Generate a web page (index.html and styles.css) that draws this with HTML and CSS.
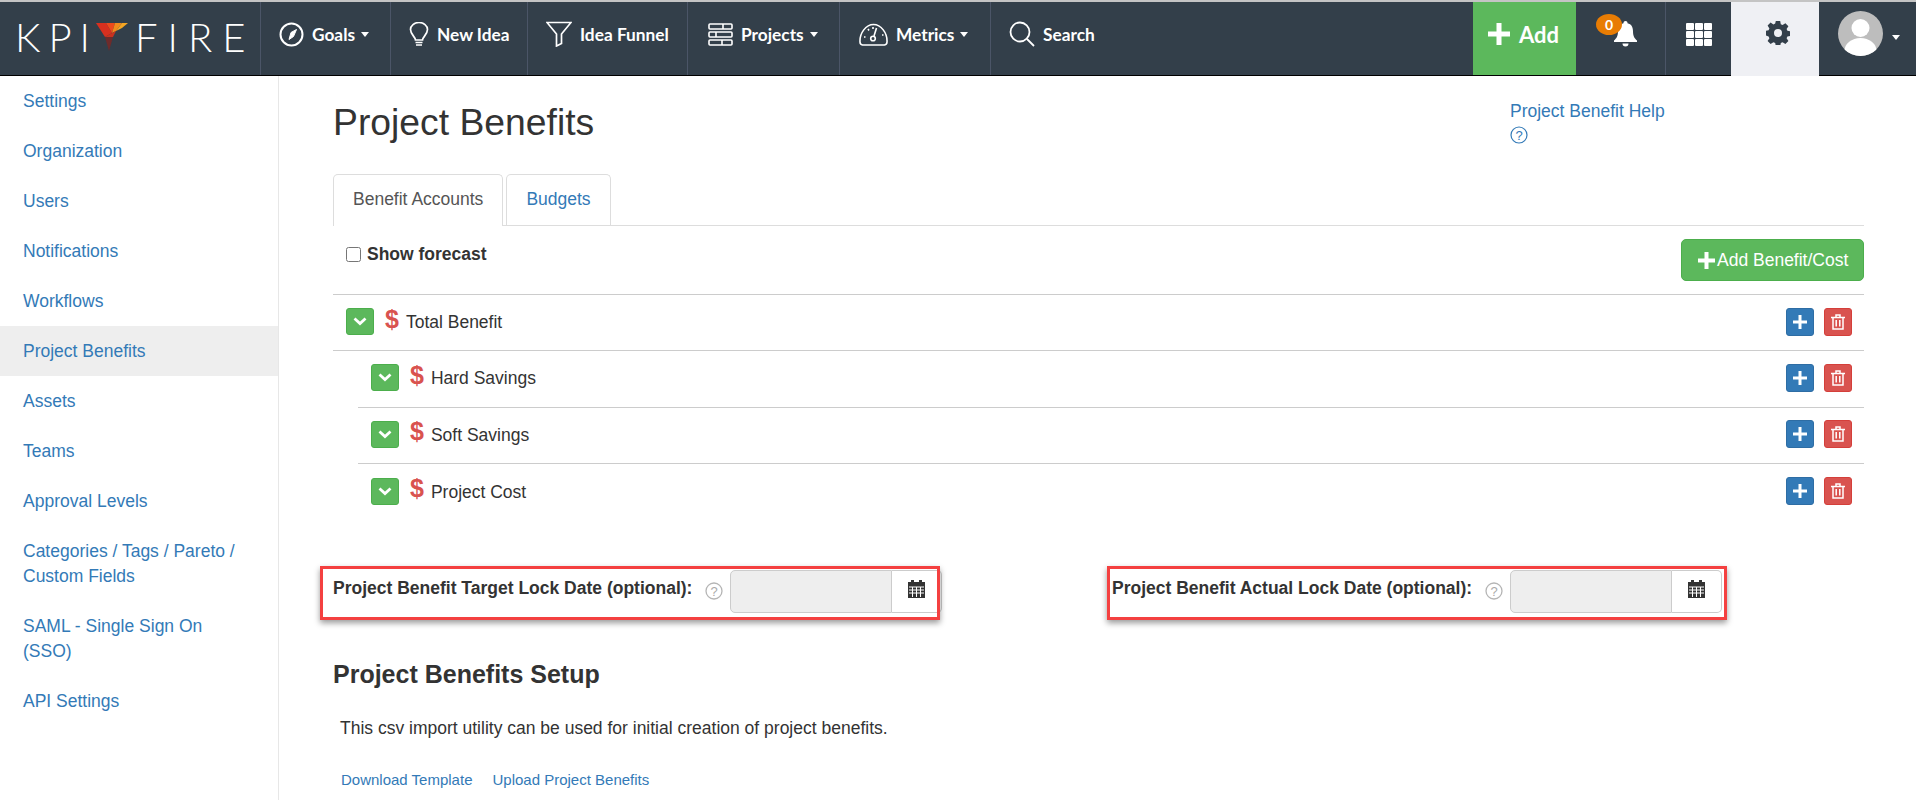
FILE: index.html
```html
<!DOCTYPE html>
<html lang="en">
<head>
<meta charset="utf-8">
<title>Project Benefits</title>
<link rel="stylesheet" href="styles.css">
</head>
<body>
<header class="topbar">
  <a class="logo">
    <span class="logo-text logo-kpi">KPI</span>
    <svg class="logo-mark" viewBox="0 0 32 28" width="32" height="28">
      <polygon points="0,0 10,0 16,10 9,14" fill="#d8301f"/>
      <polygon points="10,0 19,0 16,10" fill="#ee4a1c"/>
      <polygon points="19,0 26,0 20,8 16,10" fill="#f28a1c"/>
      <polygon points="26,0 32,0 26,5 20,8" fill="#f5a623"/>
      <polygon points="9,14 16,10 20,8 17,14" fill="#c9321f"/>
      <polygon points="9,14 17,14 13,28" fill="#6e2b2b"/>
    </svg>
    <span class="logo-text logo-fire">FIRE</span>
  </a>
  <a class="nav-item w-goals">
    <svg class="nav-icon" width="25" height="25" viewBox="0 0 25 25" fill="none" stroke="#fff" stroke-width="2"><circle cx="12.5" cy="12.5" r="11"/><path d="M17.5 7.5l-3 7-4.500 3 2-7z" fill="#fff" stroke-width="1"/></svg>
    <span>Goals</span><i class="caret"></i>
  </a>
  <a class="nav-item w-idea">
    <svg class="nav-icon" width="20" height="25" viewBox="0 0 20 25" fill="none" stroke="#fff" stroke-width="1.700"><path d="M6.500 18c0-3-5-5.500-5-10.500a8.500 7 0 0 1 17 0c0 5-5 7.500-5 10.500z"/><path d="M6.500 20.500h7M7 23h6"/></svg>
    <span>New Idea</span>
  </a>
  <a class="nav-item w-funnel">
    <svg class="nav-icon" width="26" height="26" viewBox="0 0 26 26" fill="none" stroke="#fff" stroke-width="1.700"><path d="M1 1.500h24l-9.500 11.500v9.500l-5 2.500v-12z"/></svg>
    <span>Idea Funnel</span>
  </a>
  <a class="nav-item w-projects">
    <svg class="nav-icon" width="25" height="23" viewBox="0 0 25 23" fill="none" stroke="#fff" stroke-width="1.600"><rect x="1" y="1" width="23" height="5" rx="1"/><rect x="1" y="9" width="23" height="5" rx="1"/><rect x="1" y="17" width="23" height="5" rx="1"/><path d="M15 1v5M8 9v5M14 17v5"/></svg>
    <span>Projects</span><i class="caret"></i>
  </a>
  <a class="nav-item w-metrics">
    <svg class="nav-icon" width="29" height="23" viewBox="0 0 29 23" fill="none" stroke="#fff" stroke-width="1.600"><path d="M3.500 22h22a3 3 0 0 0 2.500-3c.5-9-6-17.500-13.500-17.500S.5 10 1 19a3 3 0 0 0 2.500 3z"/><circle cx="14" cy="15.500" r="2.300"/><path d="M15 13l2.500-8M5 14h1.500M23 12h1.500M9 6l1 1.500M14 4v2"/></svg>
    <span>Metrics</span><i class="caret"></i>
  </a>
  <a class="nav-item nav-search">
    <svg class="nav-icon" width="26" height="26" viewBox="0 0 26 26" fill="none" stroke="#fff" stroke-width="1.800"><circle cx="11" cy="11" r="9.500"/><path d="M18 18l7 7"/></svg>
    <span>Search</span>
  </a>
  <a class="nav-add">
    <svg width="22" height="22" viewBox="0 0 22 22" fill="#fff"><path d="M8.500 0h5v8.500H22v5h-8.500V22h-5v-8.500H0v-5h8.500z"/></svg>
    <span>Add</span>
  </a>
  <a class="nav-bell">
    <span class="badge">0</span>
    <svg width="23" height="26" viewBox="0 0 23 26" fill="#fff"><path d="M11.500 0a2 2 0 0 1 2 2.200c4 .8 5.500 4 5.500 8 0 5 1.500 7 4 9.300v1.500H0v-1.500c2.500-2.300 4-4.300 4-9.300 0-4 1.500-7.200 5.500-8a2 2 0 0 1 2-2.200z"/><path d="M8.500 22.500h6a3 3 0 0 1-6 0z"/></svg>
  </a>
  <a class="nav-grid">
    <svg width="26" height="23" viewBox="0 0 26 23" fill="#fff"><rect width="8" height="7" rx="1"/><rect x="9" width="8" height="7" rx="1"/><rect x="18" width="8" height="7" rx="1"/><rect y="8" width="8" height="7" rx="1"/><rect x="9" y="8" width="8" height="7" rx="1"/><rect x="18" y="8" width="8" height="7" rx="1"/><rect y="16" width="8" height="7" rx="1"/><rect x="9" y="16" width="8" height="7" rx="1"/><rect x="18" y="16" width="8" height="7" rx="1"/></svg>
  </a>
  <a class="nav-gear">
    <svg width="24" height="24" viewBox="0 0 24 24" fill="#333f4a"><path fill-rule="evenodd" d="M9.800 0h4.400l.6 3.200 1.800.8 2.800-1.800 3 3-1.800 2.800.8 1.800 3.100.6v4.400l-3.100.6-.8 1.800 1.800 2.800-3 3-2.800-1.800-1.800.8-.6 3.200H9.800l-.6-3.200-1.800-.8-2.800 1.800-3-3 1.800-2.800-.8-1.800L-.5 14.200V9.800l3.100-.6.800-1.800L1.600 4.600l3-3 2.800 1.800 1.800-.8zM12 8a4 4 0 1 0 0 8 4 4 0 0 0 0-8z"/></svg>
  </a>
  <a class="nav-user">
    <svg width="45" height="45" viewBox="0 0 45 45"><defs><clipPath id="avatar-clip"><circle cx="22.500" cy="22.500" r="22.500"/></clipPath></defs><circle cx="22.500" cy="22.500" r="22.500" fill="#bdbdbd"/><g clip-path="url(#avatar-clip)" fill="#fff"><circle cx="22.500" cy="17" r="9"/><ellipse cx="22.500" cy="40" rx="16" ry="13"/></g></svg>
    <i class="caret"></i>
  </a>
</header>

<div class="page">
  <nav class="sidebar">
    <a class="side-link">Settings</a>
    <a class="side-link">Organization</a>
    <a class="side-link">Users</a>
    <a class="side-link">Notifications</a>
    <a class="side-link">Workflows</a>
    <a class="side-link active">Project Benefits</a>
    <a class="side-link">Assets</a>
    <a class="side-link">Teams</a>
    <a class="side-link">Approval Levels</a>
    <a class="side-link">Categories / Tags / Pareto / Custom Fields</a>
    <a class="side-link">SAML - Single Sign On (SSO)</a>
    <a class="side-link">API Settings</a>
  </nav>

  <main class="content">
    <div class="head">
      <h1>Project Benefits</h1>
      <div class="help">
        <a>Project Benefit Help</a>
        <svg class="help-icon" width="18" height="18" viewBox="0 0 18 18"><circle cx="9" cy="9" r="8" fill="none" stroke="#337ab7" stroke-width="1.200"/><text x="9" y="13.500" text-anchor="middle" class="help-q">?</text></svg>
      </div>
    </div>

    <div class="tabs">
      <a class="tab active">Benefit Accounts</a>
      <a class="tab">Budgets</a>
    </div>

    <div class="toolbar">
      <label class="forecast"><input type="checkbox" class="check"><span>Show forecast</span></label>
      <button class="add-btn"><svg width="17" height="17" viewBox="0 0 17 17" fill="#fff"><path d="M6.500 0h4v6.500H17v4h-6.500V17h-4v-6.500H0v-4h6.500z"/></svg><span>Add Benefit/Cost</span></button>
    </div>

    <div class="tree">
      <div class="row">
        <button class="chev"><svg width="14" height="9" viewBox="0 0 14 9" fill="none" stroke="#fff" stroke-width="2.800"><path d="M1.500 1.500l5.500 5 5.500-5"/></svg></button>
        <span class="dollar">$</span><span class="name">Total Benefit</span>
        <span class="actions">
          <button class="act blue"><svg width="14" height="14" viewBox="0 0 14 14" fill="#fff"><path d="M5.500 0h3v5.500H14v3H8.500V14h-3V8.500H0v-3h5.500z"/></svg></button>
          <button class="act red"><svg width="14" height="16" viewBox="0 0 14 16" fill="none" stroke="#fff" stroke-width="1.500"><path d="M0 3.500h14M5 3V1h4v2M2 3.500V15h10V3.500M5.200 6v6.500M8.800 6v6.500"/></svg></button>
        </span>
      </div>
      <div class="row sub">
        <button class="chev"><svg width="14" height="9" viewBox="0 0 14 9" fill="none" stroke="#fff" stroke-width="2.800"><path d="M1.500 1.500l5.500 5 5.500-5"/></svg></button>
        <span class="dollar">$</span><span class="name">Hard Savings</span>
        <span class="actions">
          <button class="act blue"><svg width="14" height="14" viewBox="0 0 14 14" fill="#fff"><path d="M5.500 0h3v5.500H14v3H8.500V14h-3V8.500H0v-3h5.500z"/></svg></button>
          <button class="act red"><svg width="14" height="16" viewBox="0 0 14 16" fill="none" stroke="#fff" stroke-width="1.500"><path d="M0 3.500h14M5 3V1h4v2M2 3.500V15h10V3.500M5.200 6v6.500M8.800 6v6.500"/></svg></button>
        </span>
      </div>
      <div class="row sub">
        <button class="chev"><svg width="14" height="9" viewBox="0 0 14 9" fill="none" stroke="#fff" stroke-width="2.800"><path d="M1.500 1.500l5.500 5 5.500-5"/></svg></button>
        <span class="dollar">$</span><span class="name">Soft Savings</span>
        <span class="actions">
          <button class="act blue"><svg width="14" height="14" viewBox="0 0 14 14" fill="#fff"><path d="M5.500 0h3v5.500H14v3H8.500V14h-3V8.500H0v-3h5.500z"/></svg></button>
          <button class="act red"><svg width="14" height="16" viewBox="0 0 14 16" fill="none" stroke="#fff" stroke-width="1.500"><path d="M0 3.500h14M5 3V1h4v2M2 3.500V15h10V3.500M5.200 6v6.500M8.800 6v6.500"/></svg></button>
        </span>
      </div>
      <div class="row sub last">
        <button class="chev"><svg width="14" height="9" viewBox="0 0 14 9" fill="none" stroke="#fff" stroke-width="2.800"><path d="M1.500 1.500l5.500 5 5.500-5"/></svg></button>
        <span class="dollar">$</span><span class="name">Project Cost</span>
        <span class="actions">
          <button class="act blue"><svg width="14" height="14" viewBox="0 0 14 14" fill="#fff"><path d="M5.500 0h3v5.500H14v3H8.500V14h-3V8.500H0v-3h5.500z"/></svg></button>
          <button class="act red"><svg width="14" height="16" viewBox="0 0 14 16" fill="none" stroke="#fff" stroke-width="1.500"><path d="M0 3.500h14M5 3V1h4v2M2 3.500V15h10V3.500M5.200 6v6.500M8.800 6v6.500"/></svg></button>
        </span>
      </div>
    </div>

    <div class="locks">
      <div class="lock lock-left">
        <label>Project Benefit Target Lock Date (optional):</label>
        <svg class="q" width="18" height="18" viewBox="0 0 18 18"><circle cx="9" cy="9" r="8" fill="none" stroke="#b5b5b5" stroke-width="1.300"/><text x="9" y="13.500" text-anchor="middle" class="q-text">?</text></svg>
        <input class="date" type="text" disabled>
        <button class="cal"><svg width="17" height="18" viewBox="0 0 17 18"><path fill="#333" d="M3 0h3v2h5V0h3v2h3v16H0V2h3z"/><path stroke="#fff" stroke-width="1" d="M1 7h15M1 10h15M1 13h15M4.500 7v10M8.500 7v10M12.500 7v10"/></svg></button>
      </div>
      <div class="lock lock-right">
        <label>Project Benefit Actual Lock Date (optional):</label>
        <svg class="q" width="18" height="18" viewBox="0 0 18 18"><circle cx="9" cy="9" r="8" fill="none" stroke="#b5b5b5" stroke-width="1.300"/><text x="9" y="13.500" text-anchor="middle" class="q-text">?</text></svg>
        <input class="date" type="text" disabled>
        <button class="cal"><svg width="17" height="18" viewBox="0 0 17 18"><path fill="#333" d="M3 0h3v2h5V0h3v2h3v16H0V2h3z"/><path stroke="#fff" stroke-width="1" d="M1 7h15M1 10h15M1 13h15M4.500 7v10M8.500 7v10M12.500 7v10"/></svg></button>
      </div>
    </div>

    <h2>Project Benefits Setup</h2>
    <p class="note">This csv import utility can be used for initial creation of project benefits.</p>
    <div class="links"><a>Download Template</a><a>Upload Project Benefits</a></div>
  </main>
</div>
</body>
</html>
```

FILE: styles.css
```css
* { box-sizing: border-box; }
html, body { margin: 0; height: 800px; overflow: hidden; }
body { font-family: "Liberation Sans", Arial, sans-serif; color: #333; background: #fff; font-size: 17.500px; }
a { color: #337ab7; text-decoration: none; }
button { font-family: inherit; padding: 0; cursor: pointer; }

/* top bar */
.topbar { display: flex; height: 76px; background: #333f4a; border-top: 2px solid #c4c4c4; border-bottom: 1px solid #000; font-family: Lato, sans-serif; font-weight: 700; font-size: 17.300px; color: #fff; }
.topbar a { color: #fff; display: flex; align-items: center; }
.logo { width: 261px; padding-left: 15px; border-right: 1px solid #4b5567; padding-bottom: 3px; }
.logo-text { font-weight: 300; font-size: 40px; line-height: 1; }
.logo-mark { flex: none; margin: 0 7px 0 0; }
.logo-kpi { width: 81px; letter-spacing: 8px; }
.logo-fire { letter-spacing: 10px; }
.nav-item { gap: 8px; padding-left: 18px; border-right: 1px solid #4b5567; padding-bottom: 9px; }
.w-goals { width: 130px; }
.w-idea { width: 137px; }
.w-funnel { width: 160px; }
.w-projects { width: 152px; padding-left: 20px; }
.w-metrics { width: 151px; padding-left: 19px; }
.nav-search { border-right: 0; flex: 1; }
.caret { width: 0; height: 0; border-left: 4.500px solid transparent; border-right: 4.500px solid transparent; border-top: 5px solid #fff; margin-left: -2px; margin-top: 1px; }
.topbar a.nav-add { width: 103px; flex: none; background: #5cb85c; font-size: 22px; gap: 9px; padding: 0 0 9px 15px; }
.topbar a.nav-bell { width: 90px; flex: none; position: relative; border-right: 1px solid #4b5567; padding: 0 0 9px 38px; }
.badge { position: absolute; left: 20px; top: 12px; width: 26px; height: 21px; border-radius: 50%; background: #e87c03; font-size: 14px; text-align: center; line-height: 21px; }
.topbar a.nav-grid { width: 65px; flex: none; justify-content: center; padding-bottom: 9px; }
.topbar a.nav-gear { width: 88px; flex: none; background: #eff0f4; justify-content: center; padding: 0 0 12px 6px; height: 74px; }
.topbar a.nav-user { width: 97px; flex: none; gap: 9px; padding: 0 0 10px 19px; }
.topbar a.nav-user .caret { margin: 8px 0 0; }

/* page */
.page { display: flex; height: 724px; }
.sidebar { width: 279px; flex: none; border-right: 1px solid #e7e7e7; }
.side-link { display: block; padding: 12.500px 30px 12.500px 23px; line-height: 25px; }
.side-link.active { background: #eee; }

.content { flex: 1; padding: 0 52px 0 54px; }
.head { display: flex; justify-content: space-between; height: 98px; }
h1 { font-size: 37.300px; font-weight: 400; margin: 23px 0 0; line-height: 46px; }
.help { width: 354px; padding-top: 23px; line-height: 25px; }
.help a { display: block; }
.help-icon { display: block; margin-top: 2px; }
.help-q { font-size: 13px; fill: #337ab7; }

.tabs { display: flex; gap: 3px; height: 52px; border-bottom: 1px solid #ddd; }
.tab { height: 52px; padding: 12px 19px 0; border: 1px solid #ddd; border-bottom: 0; border-radius: 5px 5px 0 0; line-height: 24px; }
.tab.active { background: #fff; color: #555; position: relative; }

.toolbar { display: flex; justify-content: space-between; height: 69px; padding-top: 13px; border-bottom: 1px solid #ccc; }
.forecast { display: flex; align-items: center; height: 30px; padding-left: 13px; font-weight: 700; gap: 6px; }
.check { width: 15px; height: 15px; margin: 0; }
.add-btn { display: flex; align-items: center; gap: 2px; width: 183px; height: 42px; padding-left: 16px; background: #5cb85c; border: 1px solid #4cae4c; border-radius: 5px; color: #fff; font-size: 17.500px; }

.tree { height: 225px; }
.row { display: flex; align-items: center; height: 56.300px; padding: 0 12px 2px 13px; border-bottom: 1px solid #ccc; }
.row.sub { margin-left: 25px; padding-left: 13px; }
.row.last { border-bottom: 0; }
.chev { display: flex; align-items: center; justify-content: center; width: 28px; height: 27px; background: #5cb85c; border: 1px solid #4cae4c; border-radius: 3px; }
.dollar { color: #d9534f; font-size: 25px; font-weight: 700; margin: -5px 7px 0 11px; line-height: 1; }
.name { flex: 1; margin-top: 2px; }
.actions { display: flex; gap: 10px; }
.act { display: flex; align-items: center; justify-content: center; width: 28px; height: 28px; border-radius: 3px; border: 1px solid transparent; }
.blue { background: #337ab7; border-color: #2e6da4; }
.red { background: #d9534f; border-color: #d43f3a; }

.locks { display: grid; grid-template-columns: 779px 1fr; margin-top: 50px; }
.lock { display: flex; align-items: flex-start; position: relative; height: 43px; }
.lock::after { content: ""; position: absolute; top: -4px; height: 48px; border: 3px solid #f44040; box-shadow: 0 3px 6px rgba(0,0,0,.4); }
.lock-left::after { left: -13px; width: 614px; }
.lock-right::after { left: -5px; width: 614px; }
.lock label { font-weight: 700; line-height: 24px; margin-top: 6px; white-space: nowrap; }
.q { flex: none; margin: 12px 7px 0 13px; }
.q-text { font-size: 13px; fill: #aaa; }
.date { width: 162px; height: 43px; background: #eee; border: 1px solid #ccc; border-radius: 5px 0 0 5px; }
.cal { display: flex; align-items: center; justify-content: center; width: 50px; height: 43px; background: #fff; border: 1px solid #ccc; border-left: 0; border-radius: 0 5px 5px 0; padding-bottom: 6px; }

h2 { font-size: 25px; font-weight: 700; margin: 47px 0 0; line-height: 28px; }
.note { margin: 28px 0 0 7px; line-height: 24px; }
.links { display: flex; gap: 20px; margin: 30px 0 0 8px; font-size: 15px; line-height: 20px; }
```
